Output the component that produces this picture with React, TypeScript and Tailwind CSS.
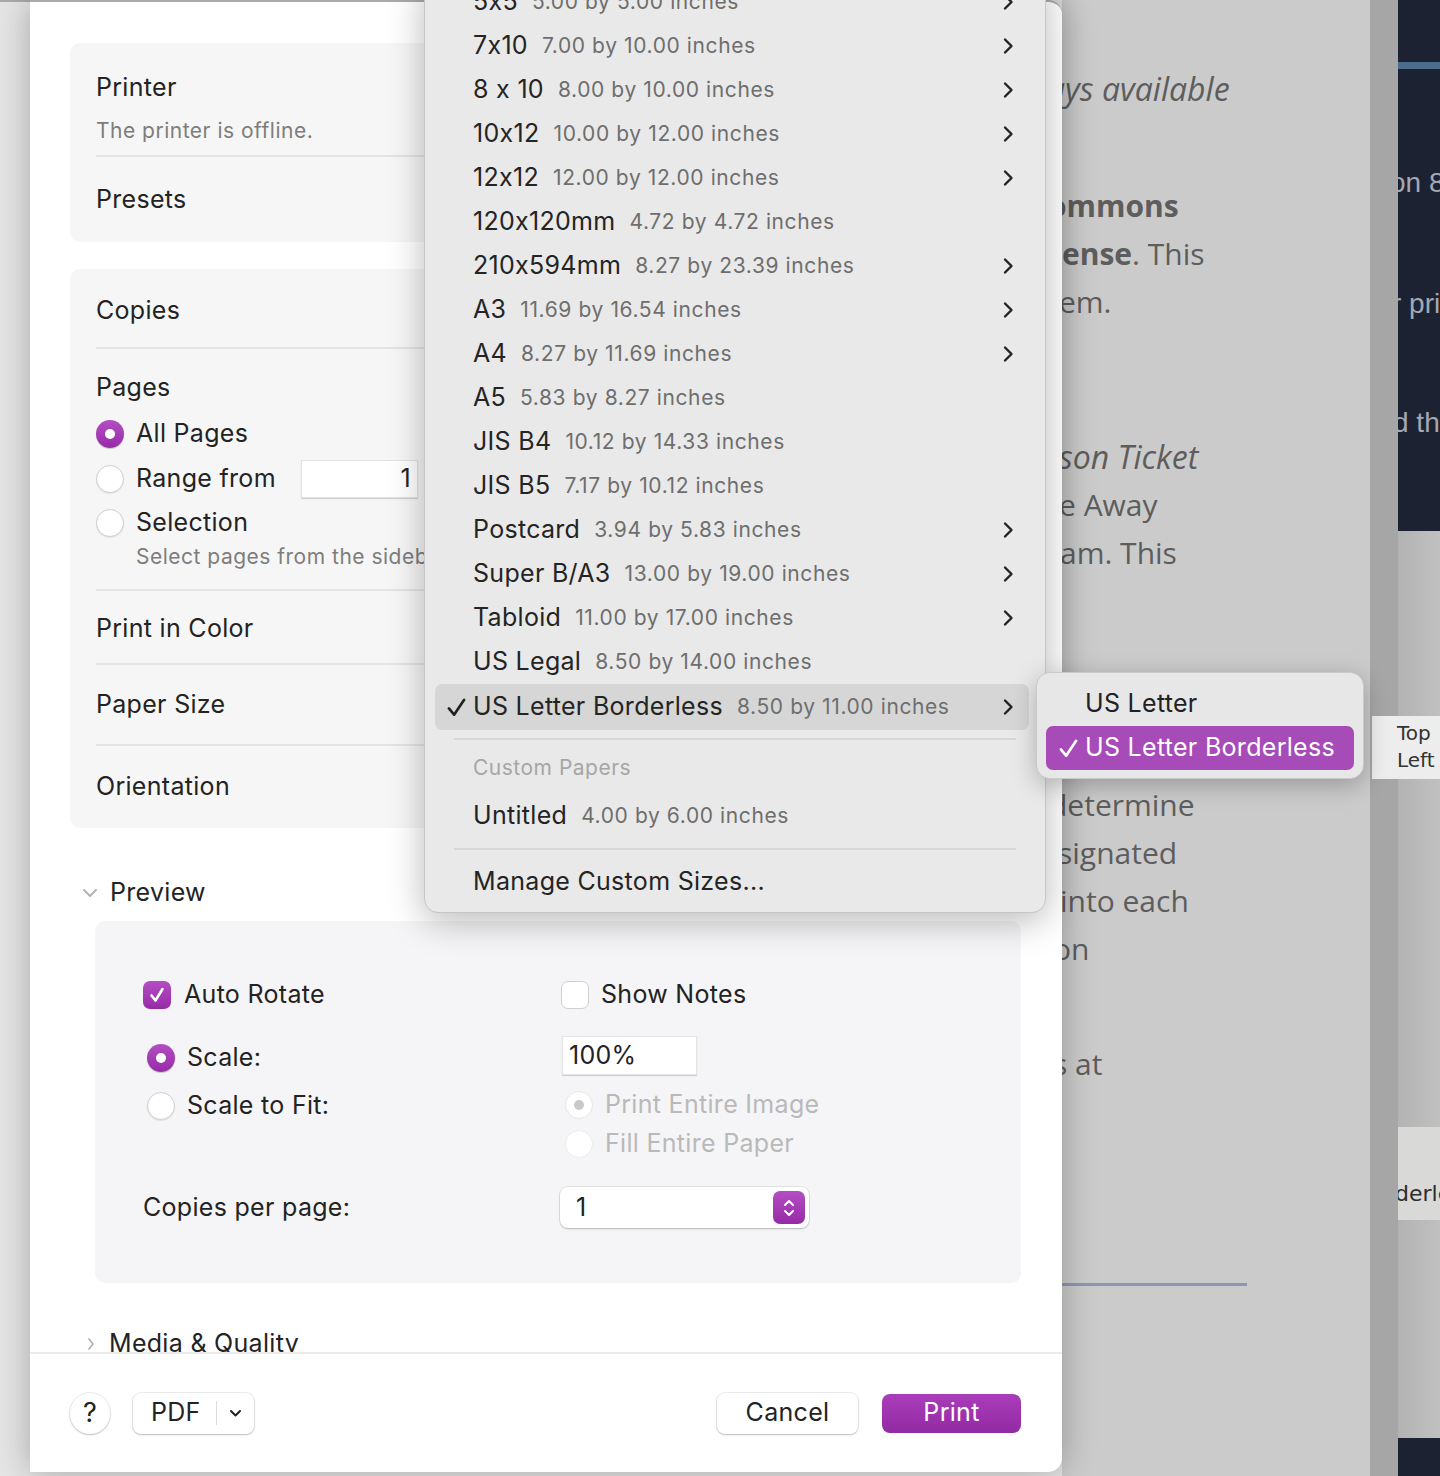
import React from "react";

type Item = [string, string, boolean];

const ITEMS: Item[] = [
  ["5x5", "5.00 by 5.00 inches", true],
  ["7x10", "7.00 by 10.00 inches", true],
  ["8 x 10", "8.00 by 10.00 inches", true],
  ["10x12", "10.00 by 12.00 inches", true],
  ["12x12", "12.00 by 12.00 inches", true],
  ["120x120mm", "4.72 by 4.72 inches", false],
  ["210x594mm", "8.27 by 23.39 inches", true],
  ["A3", "11.69 by 16.54 inches", true],
  ["A4", "8.27 by 11.69 inches", true],
  ["A5", "5.83 by 8.27 inches", false],
  ["JIS B4", "10.12 by 14.33 inches", false],
  ["JIS B5", "7.17 by 10.12 inches", false],
  ["Postcard", "3.94 by 5.83 inches", true],
  ["Super B/A3", "13.00 by 19.00 inches", true],
  ["Tabloid", "11.00 by 17.00 inches", true],
  ["US Legal", "8.50 by 14.00 inches", false],
];

function ChevronRight({ color = "#222" }: { color?: string }) {
  return (
    <svg width="12" height="18" viewBox="0 0 12 18" fill="none">
      <path d="M3 2.5 L9.5 9 L3 15.5" stroke={color} strokeWidth="2.4" strokeLinecap="round" strokeLinejoin="round" />
    </svg>
  );
}

function Check({ color = "#222", size = 22 }: { color?: string; size?: number }) {
  return (
    <svg width={size} height={size} viewBox="0 0 22 22" fill="none">
      <path d="M3 12 L8.5 18.5 L19 3" stroke={color} strokeWidth="2.8" strokeLinecap="round" strokeLinejoin="round" />
    </svg>
  );
}

function RadioOn() {
  return (
    <div className="w-[28px] h-[28px] rounded-full bg-linear-to-b from-[#b44ec4] to-[#962aa6] flex items-center justify-center shadow-[0_1px_1px_rgba(0,0,0,0.2)] shrink-0">
      <div className="w-[10px] h-[10px] rounded-full bg-white" />
    </div>
  );
}

function RadioOff() {
  return <div className="w-[28px] h-[28px] rounded-full bg-white border border-[#cfcfcf] shadow-[0_1px_1px_rgba(0,0,0,0.08)] shrink-0" />;
}

function RadioDisabledOn() {
  return (
    <div className="w-[28px] h-[28px] rounded-full bg-white border border-[#e6e6e6] flex items-center justify-center shrink-0">
      <div className="w-[10px] h-[10px] rounded-full bg-[#c9c9c9]" />
    </div>
  );
}

function RadioDisabledOff() {
  return <div className="w-[28px] h-[28px] rounded-full bg-white border border-[#ececec] shrink-0" />;
}

function Menu() {
  return (
    <div className="absolute left-[424px] top-[-21px] w-[622px] z-30 bg-[#e9e9e9] border border-[#c6c6c6] rounded-b-[14px] shadow-[0_8px_36px_rgba(0,0,0,0.28)] pb-[8px] font-[Inter,sans-serif] [font-feature-settings:'calt'_0] whitespace-nowrap">
      {ITEMS.map(([name, dim, sub]) => (
        <div key={name} className="h-[44px] ml-[10px] mr-[16px] pl-[11px] pr-[15px] flex items-center">
          <div className="w-[27px] shrink-0" />
          <span className="text-[25px] tracking-[0.3px] text-[#242424]">{name}</span>
          <span className="ml-[14px] text-[21px] text-[#6e6e6e] tracking-[0.6px]">{dim}</span>
          <div className="flex-1" />
          {sub && <ChevronRight />}
        </div>
      ))}
      <div className="h-[46px] ml-[10px] mr-[16px] pl-[11px] pr-[15px] flex items-center rounded-[7px] bg-[#d6d6d6]">
        <div className="w-[27px] shrink-0 flex items-center">
          <Check size={21} />
        </div>
        <span className="text-[25px] tracking-[0.3px] text-[#242424]">US Letter Borderless</span>
        <span className="ml-[14px] text-[21px] text-[#6e6e6e] tracking-[0.6px]">8.50 by 11.00 inches</span>
        <div className="flex-1" />
        <ChevronRight />
      </div>
      <div className="h-[18px] mx-[29px] flex items-center">
        <div className="h-[2px] w-full bg-[#d7d7d7]" />
      </div>
      <div className="h-[46px] pb-[6px] pl-[48px] flex items-center text-[21px] tracking-[0.5px] text-[#a6a6a6]">Custom Papers</div>
      <div className="h-[44px] ml-[10px] mr-[16px] pl-[38px] flex items-center">
        <span className="text-[25px] tracking-[0.3px] text-[#242424]">Untitled</span>
        <span className="ml-[14px] text-[21px] text-[#6e6e6e] tracking-[0.6px]">4.00 by 6.00 inches</span>
      </div>
      <div className="h-[22px] mx-[29px] flex items-center">
        <div className="h-[2px] w-full bg-[#d7d7d7]" />
      </div>
      <div className="h-[44px] pl-[48px] flex items-center text-[25px] tracking-[0.3px] text-[#242424]">Manage Custom Sizes...</div>
    </div>
  );
}

function SubMenu() {
  return (
    <div className="absolute left-[1036px] top-[672px] w-[328px] h-[107px] z-30 bg-[#e7e7e7] border border-[#cacaca] rounded-[14px] shadow-[0_6px_24px_rgba(0,0,0,0.25)] pt-[9px] font-[Inter,sans-serif] whitespace-nowrap">
      <div className="h-[44px] pl-[48px] flex items-center text-[25px] tracking-[0.3px] text-[#222]">US Letter</div>
      <div className="h-[44px] mx-[9px] rounded-[7px] bg-[#a64bb7] flex items-center pl-[12px]">
        <div className="w-[27px] shrink-0 flex items-center">
          <Check color="#fff" size={21} />
        </div>
        <span className="text-[25px] tracking-[0.3px] text-white">US Letter Borderless</span>
      </div>
    </div>
  );
}

function Row({ h, label, border = true, pt = 0 }: { h: string; label: string; border?: boolean; pt?: number }) {
  return (
    <div className={`${h} flex items-center ${border ? "border-b-2 border-[#e4e4e4]" : ""}`} style={{ paddingTop: pt }}>
      <span className="text-[25px]">{label}</span>
    </div>
  );
}

const BTN = "bg-white shadow-[0_0_0_1px_rgba(0,0,0,0.07),0_1px_2px_rgba(0,0,0,0.2)]";

function Dialog() {
  return (
    <div className="relative z-10 w-[1032px] h-[1472px] shrink-0 bg-white rounded-r-[14px] border-t-2 border-[#a9a9a9] shadow-[0_0_34px_rgba(0,0,0,0.28)] flex flex-col font-[Inter,sans-serif] tracking-[0.3px] text-[#232323] whitespace-nowrap">
      <div className="h-[1350px] overflow-hidden flex flex-col">
        {/* Card 1 */}
        <div className="mt-[41px] mx-[40px] rounded-[10px] bg-[#f6f6f6] pl-[26px]">
          <div className="h-[114px] border-b-2 border-[#e4e4e4] pt-[30px] flex flex-col">
            <div className="text-[25px] leading-[28px]">Printer</div>
            <div className="mt-[17px] text-[21px] leading-[26px] text-[#7d7d7d] tracking-[0.5px]">The printer is offline.</div>
          </div>
          <Row h="h-[85px]" label="Presets" border={false} pt={0} />
        </div>

        {/* Card 2 */}
        <div className="mt-[27px] mx-[40px] rounded-[10px] bg-[#f6f6f6] pl-[26px]">
          <Row h="h-[80px]" label="Copies" pt={6} />
          <div className="h-[242px] border-b-2 border-[#e4e4e4] pt-[24px] flex flex-col">
            <div className="text-[25px] leading-[28px]">Pages</div>
            <div className="mt-[19px] h-[28px] flex items-center gap-[12px]">
              <RadioOn />
              <span className="text-[25px]">All Pages</span>
            </div>
            <div className="mt-[12px] h-[38px] flex items-center">
              <RadioOff />
              <span className="ml-[12px] w-[165px] text-[25px]">Range from</span>
              <div className="w-[117px] h-[38px] bg-white border border-[#e2e2e2] shadow-[0_1px_1px_rgba(0,0,0,0.15)] flex items-center justify-end pr-[6px] text-[25px]">1</div>
            </div>
            <div className="mt-[11px] h-[28px] flex items-center gap-[12px]">
              <RadioOff />
              <span className="text-[25px]">Selection</span>
            </div>
            <div className="mt-[7px] pl-[40px] text-[21px] leading-[26px] text-[#7d7d7d] tracking-[0.5px]">Select pages from the sidebar</div>
          </div>
          <Row h="h-[74px]" label="Print in Color" pt={4} />
          <Row h="h-[81px]" label="Paper Size" />
          <Row h="h-[82px]" label="Orientation" border={false} />
        </div>

        {/* Preview header */}
        <div className="mt-[50px] h-[30px] flex items-center pl-[52px]">
          <svg width="16" height="10" viewBox="0 0 16 10" fill="none">
            <path d="M2 2 L8 8 L14 2" stroke="#b3b3b3" strokeWidth="2" strokeLinecap="round" strokeLinejoin="round" />
          </svg>
          <span className="ml-[12px] text-[25px]">Preview</span>
        </div>

        {/* Preview card */}
        <div className="mt-[13px] ml-[65px] w-[926px] h-[362px] shrink-0 rounded-[10px] bg-[#f5f5f7] pl-[48px] pt-[60px] flex flex-col">
          <div className="h-[28px] flex items-center">
            <div className="w-[418px] flex items-center">
              <div className="w-[28px] h-[28px] rounded-[7px] bg-linear-to-b from-[#b44ec4] to-[#962aa6] flex items-center justify-center">
                <svg width="18" height="18" viewBox="0 0 18 18" fill="none">
                  <path d="M3.5 9.5 L7.5 14.5 L14.5 3" stroke="#fff" strokeWidth="2.6" strokeLinecap="round" strokeLinejoin="round" />
                </svg>
              </div>
              <span className="ml-[13px] text-[25px]">Auto Rotate</span>
            </div>
            <div className="flex items-center">
              <div className="w-[28px] h-[28px] rounded-[7px] bg-white border border-[#cfcfcf]" />
              <span className="ml-[12px] text-[25px]">Show Notes</span>
            </div>
          </div>
          <div className="mt-[27px] h-[39px] flex items-center">
            <div className="w-[418px] flex items-center pl-[4px] pt-[5px]">
              <RadioOn />
              <span className="ml-[12px] text-[25px]">Scale:</span>
            </div>
            <div className="ml-[1px] w-[135px] h-[39px] bg-white border border-[#e4e4e4] shadow-[0_1px_1px_rgba(0,0,0,0.15)] flex items-center pl-[6px] text-[25px]">100%</div>
          </div>
          <div className="mt-[15px] h-[30px] flex items-center">
            <div className="w-[418px] flex items-center pl-[4px] pt-[2px]">
              <RadioOff />
              <span className="ml-[12px] text-[25px]">Scale to Fit:</span>
            </div>
            <div className="ml-[4px] flex items-center">
              <RadioDisabledOn />
              <span className="ml-[12px] text-[25px] text-[#b9b9b9]">Print Entire Image</span>
            </div>
          </div>
          <div className="mt-[10px] h-[28px] flex items-center">
            <div className="w-[418px]" />
            <div className="ml-[4px] flex items-center">
              <RadioDisabledOff />
              <span className="ml-[12px] text-[25px] text-[#b9b9b9]">Fill Entire Paper</span>
            </div>
          </div>
          <div className="mt-[29px] h-[41px] flex items-center">
            <div className="w-[417px] text-[25px]">Copies per page:</div>
            <div className={`w-[249px] h-[41px] rounded-[8px] ${BTN} flex items-center pl-[16px] pr-[4px]`}>
              <span className="text-[25px]">1</span>
              <div className="flex-1" />
              <div className="w-[32px] h-[33px] rounded-[7px] bg-linear-to-b from-[#b44ec4] to-[#962aa6] flex items-center justify-center">
                <svg width="14" height="24" viewBox="0 0 14 24" fill="none">
                  <path d="M3 9 L7 5 L11 9" stroke="#fff" strokeWidth="2" strokeLinecap="round" strokeLinejoin="round" />
                  <path d="M3 15 L7 19 L11 15" stroke="#fff" strokeWidth="2" strokeLinecap="round" strokeLinejoin="round" />
                </svg>
              </div>
            </div>
          </div>
        </div>

        {/* Media & Quality */}
        <div className="mt-[46px] h-[30px] flex items-center pl-[57px] shrink-0">
          <svg width="8" height="14" viewBox="0 0 8 14" fill="none">
            <path d="M2 2 L6 7 L2 12" stroke="#b3b3b3" strokeWidth="1.8" strokeLinecap="round" strokeLinejoin="round" />
          </svg>
          <span className="ml-[14px] text-[25px]">Media &amp; Quality</span>
        </div>
      </div>

      {/* Footer */}
      <div className="h-[120px] border-t-2 border-[#ebebeb] flex items-center pl-[40px] pr-[41px]">
        <div className={`w-[40px] h-[41px] rounded-full ${BTN} flex items-center justify-center text-[27px]`}>?</div>
        <div className={`ml-[23px] w-[121px] h-[41px] rounded-[8px] ${BTN} flex items-center pl-[18px]`}>
          <span className="text-[25px]">PDF</span>
          <div className="ml-[15px] w-[1px] h-[24px] bg-[#dcdcdc]" />
          <div className="ml-[12px]">
            <svg width="13" height="9" viewBox="0 0 13 9" fill="none">
              <path d="M2 2 L6.5 6.5 L11 2" stroke="#222" strokeWidth="2" strokeLinecap="round" strokeLinejoin="round" />
            </svg>
          </div>
        </div>
        <div className="flex-1" />
        <div className={`w-[141px] h-[41px] rounded-[8px] ${BTN} flex items-center justify-center text-[25px]`}>Cancel</div>
        <div className="ml-[24px] w-[139px] h-[39px] rounded-[8px] bg-linear-to-b from-[#aa3dba] to-[#922aa3] flex items-center justify-center text-[25px] text-white">Print</div>
      </div>
    </div>
  );
}

function DocArea() {
  return (
    <div className="w-[308px] h-[1476px] shrink-0 overflow-hidden bg-[#cbcbcb] font-['Open_Sans',sans-serif] text-[30px] leading-[48px] text-[#5d5d5d] whitespace-nowrap">
      <div className="mt-[65px] ml-[-15px] italic text-[32px]">ays available</div>
      <div className="mt-[69px] ml-[-14px] font-bold">ommons</div>
      <div className="ml-[0px]"><span className="font-bold">ense</span>. This</div>
      <div className="ml-[-3px]">em.</div>
      <div className="mt-[107px] ml-[-3px] italic text-[32px]">son Ticket</div>
      <div className="ml-[-3px]">e Away</div>
      <div className="ml-[-2px]">am. This</div>
      <div className="mt-[204px] ml-[-13px]">determine</div>
      <div className="ml-[-4px]">signated</div>
      <div className="ml-[-2px]">into each</div>
      <div className="ml-[-9px]">on</div>
      <div className="mt-[67px] ml-[-9px]">s at</div>
      <div className="mt-[195px] w-[185px] h-[3px] bg-[#8e96b6]" />
    </div>
  );
}

function DarkCol() {
  return (
    <div className="w-[42px] h-[1476px] shrink-0 flex flex-col overflow-hidden font-['Liberation_Sans',Arial,sans-serif] whitespace-nowrap">
      <div className="h-[531px] bg-[#1d2232] flex flex-col text-[28px] leading-[36px] text-[#a3a8b4]">
        <div className="mt-[62px] h-[7px] bg-[#4b6c8d]" />
        <div className="mt-[96px] ml-[-8px]">on 8</div>
        <div className="mt-[85px] ml-[-6px]">r pri</div>
        <div className="mt-[83px] ml-[-5px]">d th</div>
      </div>
      <div className="h-[596px] bg-linear-to-r from-[#b3b3b3] to-[#c0c0c0]" />
      <div className="h-[93px] bg-[#d9d9d7] flex items-end pb-[10px] font-['DejaVu_Sans',sans-serif] text-[22px] text-[#2d2d2d]">
        <span className="ml-[-3px]">derle</span>
      </div>
      <div className="h-[218px] bg-linear-to-r from-[#b3b3b3] to-[#c0c0c0]" />
      <div className="flex-1 bg-[#1d2232]" />
    </div>
  );
}

export default function App() {
  return (
    <div className="relative w-[1440px] h-[1476px] overflow-hidden flex bg-[#e4e4e4]">
      <div className="w-[30px] h-[1476px] shrink-0 bg-[#e5e5e5] border-t-2 border-[#a9a9a9]" />
      <Dialog />
      <DocArea />
      <div className="w-[28px] h-[1476px] shrink-0 bg-[#a6a6a6]" />
      <DarkCol />
      <Menu />
      <SubMenu />
      <div className="absolute left-[1372px] top-[716px] w-[80px] h-[63px] z-20 bg-[#ededed] pl-[25px] pt-[4px] font-['DejaVu_Sans',sans-serif] text-[20px] leading-[27px] text-[#333]">
        <div>Top</div>
        <div>Left</div>
      </div>
    </div>
  );
}
